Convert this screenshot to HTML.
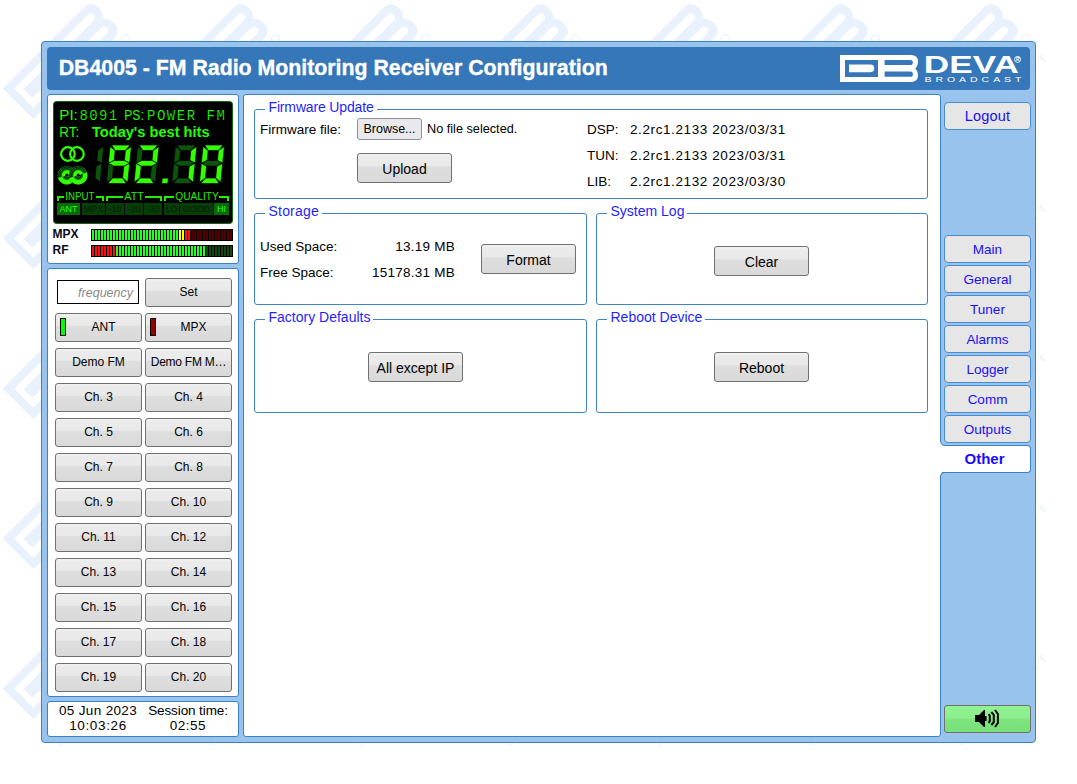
<!DOCTYPE html>
<html><head><meta charset="utf-8">
<style>
html,body{margin:0;padding:0;background:#fff;}
body{width:1077px;height:784px;position:relative;overflow:hidden;font-family:"Liberation Sans",sans-serif;color:#000;}
.a{position:absolute;}
svg{position:absolute;left:0;top:0;}
#frame{left:41px;top:41px;width:993px;height:700px;background:#97c3ec;border:1px solid #3c80c6;border-radius:4px;}
#hdr{left:47px;top:47px;width:983px;height:43px;background:#3577b8;border-radius:4px;}
#title{left:58.7px;top:55px;font-weight:bold;font-size:21.3px;line-height:26px;color:#fff;white-space:nowrap;-webkit-text-stroke:0.35px #fff;}
.pnl{background:#fff;border:1px solid #3c80c6;border-radius:3px;}
.fs{box-sizing:border-box;border:1px solid #3f84c8;border-radius:3px;}
.lg{background:#fff;color:#1f1fff;font-size:14px;line-height:15px;padding:0 3px 0 3.5px;white-space:nowrap;}
.t13{font-size:13.5px;line-height:15px;white-space:nowrap;}
.btn{box-sizing:border-box;border:1px solid #707070;border-radius:3px;background:linear-gradient(#f2f2f2 0,#ebebeb 10%,#e9e9e9 42%,#dedede 46%,#d9d9d9 100%);text-align:center;white-space:nowrap;color:#000;}
.lb{width:87px;height:29px;font-size:12px;line-height:27px;}
.mb{width:95px;height:30px;font-size:14px;line-height:31px;}
.nav{box-sizing:border-box;left:944px;width:87px;height:28px;border:1px solid #4a8ad0;border-radius:4px;background:#e6e6e6;color:#1a0dff;font-size:13.5px;line-height:27px;text-align:center;}
</style></head><body>
<svg width="1050" height="746" style="left:0;top:0"><defs><g id="mk" fill="#e9f1fc"><path fill-rule="evenodd" d="M0,0 H71 Q78,0 78,6.5 Q78,11 75.2,13.5 Q78,16 78,20.5 Q78,27 71,27 H0 Z M5,5 V22 H38 V5 Z M44.6,5 V10.1 H70.3 A2.55,2.55 0 0 0 70.3,5 Z M44.6,16.6 V21.8 H70.3 A2.6,2.6 0 0 0 70.3,16.6 Z"/><path d="M9,9.5 H30.4 A3.85,3.85 0 0 1 30.4,17.2 H9 Z"/><text x="0" y="44.5" font-family="Liberation Sans" font-weight="bold" font-size="17.8" transform="scale(1.47 1)">DEVA</text><text x="0" y="50.8" font-family="Liberation Sans" font-size="6.2" letter-spacing="2.6" transform="scale(1.3 1)">BROADCAST</text><circle cx="76" cy="32.3" r="2.6" fill="none" stroke="#e9f1fc" stroke-width="0.7"/></g></defs><use href="#mk" transform="translate(-147.2 -61.5) rotate(-45) scale(1.6)"/><use href="#mk" transform="translate(-147.2 88.5) rotate(-45) scale(1.6)"/><use href="#mk" transform="translate(-147.2 238.5) rotate(-45) scale(1.6)"/><use href="#mk" transform="translate(-147.2 388.5) rotate(-45) scale(1.6)"/><use href="#mk" transform="translate(-147.2 538.5) rotate(-45) scale(1.6)"/><use href="#mk" transform="translate(-147.2 688.5) rotate(-45) scale(1.6)"/><use href="#mk" transform="translate(-147.2 838.5) rotate(-45) scale(1.6)"/><use href="#mk" transform="translate(2.8 -61.5) rotate(-45) scale(1.6)"/><use href="#mk" transform="translate(2.8 88.5) rotate(-45) scale(1.6)"/><use href="#mk" transform="translate(2.8 238.5) rotate(-45) scale(1.6)"/><use href="#mk" transform="translate(2.8 388.5) rotate(-45) scale(1.6)"/><use href="#mk" transform="translate(2.8 538.5) rotate(-45) scale(1.6)"/><use href="#mk" transform="translate(2.8 688.5) rotate(-45) scale(1.6)"/><use href="#mk" transform="translate(2.8 838.5) rotate(-45) scale(1.6)"/><use href="#mk" transform="translate(152.8 -61.5) rotate(-45) scale(1.6)"/><use href="#mk" transform="translate(152.8 88.5) rotate(-45) scale(1.6)"/><use href="#mk" transform="translate(152.8 238.5) rotate(-45) scale(1.6)"/><use href="#mk" transform="translate(152.8 388.5) rotate(-45) scale(1.6)"/><use href="#mk" transform="translate(152.8 538.5) rotate(-45) scale(1.6)"/><use href="#mk" transform="translate(152.8 688.5) rotate(-45) scale(1.6)"/><use href="#mk" transform="translate(152.8 838.5) rotate(-45) scale(1.6)"/><use href="#mk" transform="translate(302.8 -61.5) rotate(-45) scale(1.6)"/><use href="#mk" transform="translate(302.8 88.5) rotate(-45) scale(1.6)"/><use href="#mk" transform="translate(302.8 238.5) rotate(-45) scale(1.6)"/><use href="#mk" transform="translate(302.8 388.5) rotate(-45) scale(1.6)"/><use href="#mk" transform="translate(302.8 538.5) rotate(-45) scale(1.6)"/><use href="#mk" transform="translate(302.8 688.5) rotate(-45) scale(1.6)"/><use href="#mk" transform="translate(302.8 838.5) rotate(-45) scale(1.6)"/><use href="#mk" transform="translate(452.8 -61.5) rotate(-45) scale(1.6)"/><use href="#mk" transform="translate(452.8 88.5) rotate(-45) scale(1.6)"/><use href="#mk" transform="translate(452.8 238.5) rotate(-45) scale(1.6)"/><use href="#mk" transform="translate(452.8 388.5) rotate(-45) scale(1.6)"/><use href="#mk" transform="translate(452.8 538.5) rotate(-45) scale(1.6)"/><use href="#mk" transform="translate(452.8 688.5) rotate(-45) scale(1.6)"/><use href="#mk" transform="translate(452.8 838.5) rotate(-45) scale(1.6)"/><use href="#mk" transform="translate(602.8 -61.5) rotate(-45) scale(1.6)"/><use href="#mk" transform="translate(602.8 88.5) rotate(-45) scale(1.6)"/><use href="#mk" transform="translate(602.8 238.5) rotate(-45) scale(1.6)"/><use href="#mk" transform="translate(602.8 388.5) rotate(-45) scale(1.6)"/><use href="#mk" transform="translate(602.8 538.5) rotate(-45) scale(1.6)"/><use href="#mk" transform="translate(602.8 688.5) rotate(-45) scale(1.6)"/><use href="#mk" transform="translate(602.8 838.5) rotate(-45) scale(1.6)"/><use href="#mk" transform="translate(752.8 -61.5) rotate(-45) scale(1.6)"/><use href="#mk" transform="translate(752.8 88.5) rotate(-45) scale(1.6)"/><use href="#mk" transform="translate(752.8 238.5) rotate(-45) scale(1.6)"/><use href="#mk" transform="translate(752.8 388.5) rotate(-45) scale(1.6)"/><use href="#mk" transform="translate(752.8 538.5) rotate(-45) scale(1.6)"/><use href="#mk" transform="translate(752.8 688.5) rotate(-45) scale(1.6)"/><use href="#mk" transform="translate(752.8 838.5) rotate(-45) scale(1.6)"/><use href="#mk" transform="translate(902.8 -61.5) rotate(-45) scale(1.6)"/><use href="#mk" transform="translate(902.8 88.5) rotate(-45) scale(1.6)"/><use href="#mk" transform="translate(902.8 238.5) rotate(-45) scale(1.6)"/><use href="#mk" transform="translate(902.8 388.5) rotate(-45) scale(1.6)"/><use href="#mk" transform="translate(902.8 538.5) rotate(-45) scale(1.6)"/><use href="#mk" transform="translate(902.8 688.5) rotate(-45) scale(1.6)"/><use href="#mk" transform="translate(902.8 838.5) rotate(-45) scale(1.6)"/><use href="#mk" transform="translate(1052.8 -61.5) rotate(-45) scale(1.6)"/><use href="#mk" transform="translate(1052.8 88.5) rotate(-45) scale(1.6)"/><use href="#mk" transform="translate(1052.8 238.5) rotate(-45) scale(1.6)"/><use href="#mk" transform="translate(1052.8 388.5) rotate(-45) scale(1.6)"/><use href="#mk" transform="translate(1052.8 538.5) rotate(-45) scale(1.6)"/><use href="#mk" transform="translate(1052.8 688.5) rotate(-45) scale(1.6)"/><use href="#mk" transform="translate(1052.8 838.5) rotate(-45) scale(1.6)"/></svg>
<div id="frame" class="a"></div>
<div id="hdr" class="a"></div>
<div id="title" class="a">DB4005 - FM Radio Monitoring Receiver Configuration</div>

<!-- left panels -->
<div class="a pnl" style="left:47px;top:94px;width:190px;height:168px;"></div>
<div class="a pnl" style="left:47px;top:268px;width:190px;height:427px;"></div>
<div class="a pnl" style="left:47px;top:701px;width:190px;height:34px;"></div>
<!-- main panel -->
<div class="a pnl" style="left:243px;top:94px;width:696px;height:641px;"></div>


<!-- left panel 2 content -->
<div class="a" style="left:57px;top:280px;width:80px;height:22px;border:1px solid #000;background:#fff;"></div>
<div class="a" style="left:57px;top:284.5px;width:76px;text-align:right;font-style:italic;font-size:12.5px;line-height:16px;color:#8a8a8a;">frequency</div>
<div class="a btn lb" style="left:145px;top:278px">Set</div>
<div class="a btn lb" style="left:55px;top:313px;padding-left:10px">ANT</div>
<div class="a btn lb" style="left:145px;top:313px;padding-left:10px">MPX</div>
<div class="a" style="left:60px;top:318px;width:4px;height:16px;border:1px solid #000;background:#00ff00;"></div>
<div class="a" style="left:150px;top:318px;width:4px;height:16px;border:1px solid #000;background:#990000;"></div>
<div class="a btn lb" style="left:55px;top:348px">Demo FM</div><div class="a btn lb" style="left:145px;top:348px;letter-spacing:-0.25px">Demo FM M…</div>
<div class="a btn lb" style="left:55px;top:383px">Ch. 3</div><div class="a btn lb" style="left:145px;top:383px">Ch. 4</div>
<div class="a btn lb" style="left:55px;top:418px">Ch. 5</div><div class="a btn lb" style="left:145px;top:418px">Ch. 6</div>
<div class="a btn lb" style="left:55px;top:453px">Ch. 7</div><div class="a btn lb" style="left:145px;top:453px">Ch. 8</div>
<div class="a btn lb" style="left:55px;top:488px">Ch. 9</div><div class="a btn lb" style="left:145px;top:488px">Ch. 10</div>
<div class="a btn lb" style="left:55px;top:523px">Ch. 11</div><div class="a btn lb" style="left:145px;top:523px">Ch. 12</div>
<div class="a btn lb" style="left:55px;top:558px">Ch. 13</div><div class="a btn lb" style="left:145px;top:558px">Ch. 14</div>
<div class="a btn lb" style="left:55px;top:593px">Ch. 15</div><div class="a btn lb" style="left:145px;top:593px">Ch. 16</div>
<div class="a btn lb" style="left:55px;top:628px">Ch. 17</div><div class="a btn lb" style="left:145px;top:628px">Ch. 18</div>
<div class="a btn lb" style="left:55px;top:663px">Ch. 19</div><div class="a btn lb" style="left:145px;top:663px">Ch. 20</div>
<!-- date panel -->
<div class="a" style="left:48px;top:703px;width:100px;text-align:center;font-size:13.5px;line-height:15px;white-space:nowrap"><span style="letter-spacing:0.35px">05 Jun 2023</span><br><span style="letter-spacing:0.65px">10:03:26</span></div>
<div class="a" style="left:138px;top:703px;width:100px;text-align:center;font-size:13.5px;line-height:15px;white-space:nowrap"><span style="letter-spacing:-0.1px">Session time:</span><br><span style="letter-spacing:0.5px">02:55</span></div>

<!-- main content -->
<div class="a fs" style="left:254px;top:109px;width:674px;height:90px;"></div>
<div class="a lg" style="left:265px;top:100px;letter-spacing:-0.15px">Firmware Update</div>
<div class="a t13" style="left:260px;top:122px;">Firmware file:</div>
<div class="a" style="box-sizing:border-box;left:357px;top:118px;width:65px;height:22px;border:1px solid #8f8f9d;border-radius:3px;background:#e9e9ed;font-size:12.5px;line-height:21px;text-align:center;">Browse...</div>
<div class="a" style="left:427px;top:122px;font-size:12.7px;line-height:15px;white-space:nowrap;">No file selected.</div>
<div class="a btn mb" style="left:357px;top:153px">Upload</div>
<div class="a t13" style="left:587px;line-height:26px;top:117px">DSP:<br>TUN:<br>LIB:</div>
<div class="a t13" style="left:630px;top:117px;line-height:26px;letter-spacing:0.6px">2.2rc1.2133 2023/03/31<br>2.2rc1.2133 2023/03/31<br>2.2rc1.2132 2023/03/30</div>

<div class="a fs" style="left:254px;top:213px;width:333px;height:92px;"></div>
<div class="a lg" style="left:265px;top:204px;letter-spacing:0.2px">Storage</div>
<div class="a t13" style="left:260px;top:234px;line-height:26px;">Used Space:<br>Free Space:</div>
<div class="a t13" style="left:340px;top:234px;width:115px;text-align:right;line-height:26px;letter-spacing:0.25px">13.19 MB<br>15178.31 MB</div>
<div class="a btn mb" style="left:481px;top:244px">Format</div>

<div class="a fs" style="left:596px;top:213px;width:332px;height:92px;"></div>
<div class="a lg" style="left:607px;top:204px;">System Log</div>
<div class="a btn mb" style="left:714px;top:246px">Clear</div>

<div class="a fs" style="left:254px;top:319px;width:333px;height:94px;"></div>
<div class="a lg" style="left:265px;top:310px;">Factory Defaults</div>
<div class="a btn mb" style="left:368px;top:352px">All except IP</div>

<div class="a fs" style="left:596px;top:319px;width:332px;height:94px;"></div>
<div class="a lg" style="left:607px;top:310px;">Reboot Device</div>
<div class="a btn mb" style="left:714px;top:352px">Reboot</div>

<!-- nav -->
<div class="a nav" style="top:102px;font-size:14.5px;letter-spacing:0.2px">Logout</div>
<div class="a nav" style="top:235px">Main</div>
<div class="a nav" style="top:265px">General</div>
<div class="a nav" style="top:295px">Tuner</div>
<div class="a nav" style="top:325px">Alarms</div>
<div class="a nav" style="top:355px">Logger</div>
<div class="a nav" style="top:385px">Comm</div>
<div class="a nav" style="top:415px">Outputs</div>
<div class="a" style="box-sizing:border-box;left:940px;top:445px;width:91px;height:28px;background:#fff;border:1px solid #3c80c6;border-left:none;border-radius:0 4px 4px 0;color:#1a0dff;font-weight:bold;font-size:15px;line-height:26px;text-align:center;padding-right:1px">Other</div>
<div class="a" style="box-sizing:border-box;left:944px;top:705px;width:87px;height:28px;border:1px solid #6f6f6f;border-radius:3px;background:linear-gradient(#92f292 0,#8cee8c 45%,#7ee47e 55%,#78e078 100%);"></div>

<!-- graphics overlay -->
<svg width="1077" height="784" style="pointer-events:none">
 <!-- header logo -->
 <g fill="#fff">
  <path fill-rule="evenodd" d="M840,55 H911 Q918,55 918,61.5 Q918,66 915.2,68.5 Q918,71 918,75.5 Q918,82 911,82 H840 Z
   M845,60 V77 H878 V60 Z
   M884.6,60 V65.1 H910.3 A2.55,2.55 0 0 0 910.3,60 Z
   M884.6,71.6 V76.8 H910.3 A2.6,2.6 0 0 0 910.3,71.6 Z"/>
  <path d="M849,64.5 H870.4 A3.85,3.85 0 0 1 870.4,72.2 H849 Z"/>
 </g>
 <text x="923.8" y="73" font-family="Liberation Sans" font-weight="bold" font-size="23.3" fill="#fff" transform="translate(923.8 0) scale(1.51 1) translate(-923.8 0)">DEVA</text>
 <text x="924.5" y="81.8" font-family="Liberation Sans" font-size="6.6" fill="#fff" letter-spacing="2.45" transform="translate(924.5 0) scale(1.6 1) translate(-924.5 0)">BROADCAST</text>
 <circle cx="1017.6" cy="59.4" r="3" fill="none" stroke="#fff" stroke-width="0.9"/>
 <text x="1015.9" y="61.3" font-family="Liberation Sans" font-weight="bold" font-size="5" fill="#fff">R</text>

 <!-- LCD -->
 <rect x="53.5" y="101.5" width="179" height="122" rx="3" fill="#000" stroke="#0b6b0b" stroke-width="1"/>
 <g fill="#22ff00" font-family="Liberation Sans">
  <text x="59.3" y="120" font-size="15" textLength="18.5" lengthAdjust="spacingAndGlyphs">PI:</text>
  <text x="124.3" y="120" font-size="15" textLength="19.5" lengthAdjust="spacingAndGlyphs">PS:</text>
  <text x="59.3" y="136.5" font-size="14" textLength="20" lengthAdjust="spacingAndGlyphs">RT:</text>
  <text x="92" y="136.5" font-size="14.5" font-weight="bold" textLength="117.5" lengthAdjust="spacingAndGlyphs">Today's best hits</text>
 </g>
 <g fill="#22ff00" font-family="Liberation Mono" font-size="14" stroke="#000" stroke-width="0.2">
  <text x="79.6" y="120" textLength="37.6" lengthAdjust="spacing">8091</text>
  <text x="147" y="120" textLength="77.8" lengthAdjust="spacing">POWER FM</text>
 </g>
 <!-- stereo rings -->
 <g fill="none" stroke="#33ff00" stroke-width="2.2">
  <circle cx="67.9" cy="154" r="6.8"/>
  <circle cx="76.9" cy="154" r="6.8"/>
 </g>
 <!-- RDS icon -->
 <g><circle cx="66.9" cy="175.2" r="9.3" fill="#128012"/><circle cx="66.9" cy="175.2" r="6.5" fill="none" stroke="#000" stroke-width="0.9"/><circle cx="66.9" cy="175.2" r="8.2" fill="none" stroke="#000" stroke-width="0.8"/><circle cx="66.9" cy="175.2" r="3.1" fill="none" stroke="#000" stroke-width="0.9"/><g transform="rotate(-18 66.9 175.2)"><path d="M62.00000000000001,175.2 A4.9,4.9 0 0 1 71.80000000000001,175.2 L68.30000000000001,175.2 A1.4,1.4 0 0 0 65.5,175.2 Z" fill="#33ff00"/><path d="M57.60000000000001,175.2 A9.3,9.3 0 0 0 76.2,175.2 L71.80000000000001,175.2 A4.9,4.9 0 0 1 62.00000000000001,175.2 Z" fill="#33ff00"/></g><circle cx="66.9" cy="175.2" r="1.4" fill="#000"/><circle cx="78.2" cy="175.2" r="9.3" fill="#128012"/><circle cx="78.2" cy="175.2" r="6.5" fill="none" stroke="#000" stroke-width="0.9"/><circle cx="78.2" cy="175.2" r="8.2" fill="none" stroke="#000" stroke-width="0.8"/><circle cx="78.2" cy="175.2" r="3.1" fill="none" stroke="#000" stroke-width="0.9"/><g transform="rotate(-18 78.2 175.2)"><path d="M73.3,175.2 A4.9,4.9 0 0 1 83.10000000000001,175.2 L79.60000000000001,175.2 A1.4,1.4 0 0 0 76.8,175.2 Z" fill="#33ff00"/><path d="M68.9,175.2 A9.3,9.3 0 0 0 87.5,175.2 L83.10000000000001,175.2 A4.9,4.9 0 0 1 73.3,175.2 Z" fill="#33ff00"/></g><circle cx="78.2" cy="175.2" r="1.4" fill="#000"/></g>
 <g stroke="#000" stroke-width="0.7">
 <polygon points="103.72,146.40 102.03,163.30 96.71,160.50 97.70,150.60" fill="#0c530c"/>
<polygon points="102.03,163.30 100.14,182.20 94.96,178.00 96.15,166.10" fill="#0c530c"/>
<polygon points="111.56,145.00 130.16,145.00 125.40,150.60 115.20,150.60" fill="#33ff00"/>
<polygon points="131.42,146.40 129.73,163.30 124.41,160.50 125.40,150.60" fill="#33ff00"/>
<polygon points="129.73,163.30 127.84,182.20 122.66,178.00 123.85,166.10" fill="#33ff00"/>
<polygon points="107.70,183.60 112.46,178.00 122.66,178.00 126.30,183.60" fill="#33ff00"/>
<polygon points="108.33,163.30 113.65,166.10 112.46,178.00 106.44,182.20" fill="#0c530c"/>
<polygon points="110.02,146.40 115.20,150.60 114.21,160.50 108.33,163.30" fill="#33ff00"/>
<polygon points="108.33,163.30 114.21,160.50 124.41,160.50 129.73,163.30 123.85,166.10 113.65,166.10" fill="#33ff00"/>
<polygon points="139.16,145.00 157.76,145.00 153.00,150.60 142.80,150.60" fill="#33ff00"/>
<polygon points="159.02,146.40 157.33,163.30 152.01,160.50 153.00,150.60" fill="#33ff00"/>
<polygon points="157.33,163.30 155.44,182.20 150.26,178.00 151.45,166.10" fill="#0c530c"/>
<polygon points="135.30,183.60 140.06,178.00 150.26,178.00 153.90,183.60" fill="#33ff00"/>
<polygon points="135.93,163.30 141.25,166.10 140.06,178.00 134.04,182.20" fill="#33ff00"/>
<polygon points="137.62,146.40 142.80,150.60 141.81,160.50 135.93,163.30" fill="#0c530c"/>
<polygon points="135.93,163.30 141.81,160.50 152.01,160.50 157.33,163.30 151.45,166.10 141.25,166.10" fill="#33ff00"/>
<polygon points="176.96,145.00 195.56,145.00 190.80,150.60 180.60,150.60" fill="#0c530c"/>
<polygon points="196.82,146.40 195.13,163.30 189.81,160.50 190.80,150.60" fill="#33ff00"/>
<polygon points="195.13,163.30 193.24,182.20 188.06,178.00 189.25,166.10" fill="#33ff00"/>
<polygon points="173.10,183.60 177.86,178.00 188.06,178.00 191.70,183.60" fill="#0c530c"/>
<polygon points="173.73,163.30 179.05,166.10 177.86,178.00 171.84,182.20" fill="#0c530c"/>
<polygon points="175.42,146.40 180.60,150.60 179.61,160.50 173.73,163.30" fill="#0c530c"/>
<polygon points="173.73,163.30 179.61,160.50 189.81,160.50 195.13,163.30 189.25,166.10 179.05,166.10" fill="#0c530c"/>
<polygon points="204.56,145.00 223.16,145.00 218.40,150.60 208.20,150.60" fill="#33ff00"/>
<polygon points="224.42,146.40 222.73,163.30 217.41,160.50 218.40,150.60" fill="#33ff00"/>
<polygon points="222.73,163.30 220.84,182.20 215.66,178.00 216.85,166.10" fill="#33ff00"/>
<polygon points="200.70,183.60 205.46,178.00 215.66,178.00 219.30,183.60" fill="#33ff00"/>
<polygon points="201.33,163.30 206.65,166.10 205.46,178.00 199.44,182.20" fill="#33ff00"/>
<polygon points="203.02,146.40 208.20,150.60 207.21,160.50 201.33,163.30" fill="#33ff00"/>
<polygon points="201.33,163.30 207.21,160.50 217.41,160.50 222.73,163.30 216.85,166.10 206.65,166.10" fill="#0c530c"/>
 </g>
 <polygon points="162.6,178.4 168,178.4 167.5,183.2 162.1,183.2" fill="#33ff00"/>
 <!-- brackets -->
 <g fill="#22ee00">
  <rect x="57" y="196" width="7" height="2"/><rect x="57" y="196" width="2" height="5"/>
  <rect x="96" y="196" width="8" height="2"/><rect x="102" y="196" width="2" height="5"/>
  <rect x="106" y="196" width="17" height="2"/><rect x="106" y="196" width="2" height="5"/>
  <rect x="145" y="196" width="17" height="2"/><rect x="160" y="196" width="2" height="5"/>
  <rect x="164" y="196" width="10" height="2"/><rect x="164" y="196" width="2" height="5"/>
  <rect x="219" y="196" width="10" height="2"/><rect x="227" y="196" width="2" height="5"/>
 </g>
 <g font-family="Liberation Sans" font-size="10.5" fill="#22ee00">
  <text x="65.3" y="200" textLength="29" lengthAdjust="spacingAndGlyphs">INPUT</text>
  <text x="124.3" y="200" textLength="19.5" lengthAdjust="spacingAndGlyphs">ATT</text>
  <text x="175.3" y="200" textLength="43.5" lengthAdjust="spacingAndGlyphs">QUALITY</text>
 </g>
 <g>
  <rect x="57" y="203" width="23" height="12" fill="#0a6a0a"/>
  <rect x="82" y="203" width="23" height="12" fill="#073d07"/>
  <rect x="106" y="203" width="18" height="12" fill="#073d07"/>
  <rect x="125" y="203" width="18" height="12" fill="#073d07"/>
  <rect x="144" y="203" width="18" height="12" fill="#073d07"/>
  <rect x="164" y="203" width="15" height="12" fill="#073d07"/>
  <rect x="180" y="203" width="33" height="12" fill="#073d07"/>
  <rect x="214" y="203" width="15" height="12" fill="#0a6a0a"/>
 </g>
 <g font-family="Liberation Sans" font-size="9" text-anchor="middle">
  <text x="68.5" y="212" fill="#33ff00">ANT</text>
  <text x="93.5" y="212" fill="#021f02">MPX</text>
  <text x="115" y="212" fill="#021f02">-10</text>
  <text x="134" y="212" fill="#021f02">-20</text>
  <text x="153" y="212" fill="#021f02">-30</text>
  <text x="171.5" y="212" fill="#021f02">LO</text>
  <text x="196.5" y="212" fill="#021f02">GOOD</text>
  <text x="221.5" y="212" fill="#33ff00">HI</text>
 </g>
 <!-- bars -->
 <g font-family="Liberation Sans" font-weight="bold" font-size="12" fill="#0a0a1a">
  <text x="52.5" y="238">MPX</text>
  <text x="52.5" y="254">RF</text>
 </g>
 <rect x="91" y="229" width="142" height="12" fill="#000"/>
<rect x="92" y="230" width="2" height="10" fill="#22ff22"/>
<rect x="95" y="230" width="2" height="10" fill="#22ff22"/>
<rect x="98" y="230" width="2" height="10" fill="#22ff22"/>
<rect x="101" y="230" width="2" height="10" fill="#22ff22"/>
<rect x="104" y="230" width="2" height="10" fill="#22ff22"/>
<rect x="107" y="230" width="2" height="10" fill="#22ff22"/>
<rect x="110" y="230" width="2" height="10" fill="#22ff22"/>
<rect x="113" y="230" width="2" height="10" fill="#22ff22"/>
<rect x="116" y="230" width="2" height="10" fill="#22ff22"/>
<rect x="119" y="230" width="2" height="10" fill="#22ff22"/>
<rect x="122" y="230" width="2" height="10" fill="#22ff22"/>
<rect x="125" y="230" width="2" height="10" fill="#22ff22"/>
<rect x="128" y="230" width="2" height="10" fill="#22ff22"/>
<rect x="131" y="230" width="2" height="10" fill="#22ff22"/>
<rect x="134" y="230" width="2" height="10" fill="#22ff22"/>
<rect x="137" y="230" width="2" height="10" fill="#22ff22"/>
<rect x="140" y="230" width="2" height="10" fill="#22ff22"/>
<rect x="143" y="230" width="2" height="10" fill="#22ff22"/>
<rect x="146" y="230" width="2" height="10" fill="#22ff22"/>
<rect x="149" y="230" width="2" height="10" fill="#22ff22"/>
<rect x="152" y="230" width="2" height="10" fill="#22ff22"/>
<rect x="155" y="230" width="2" height="10" fill="#22ff22"/>
<rect x="158" y="230" width="2" height="10" fill="#22ff22"/>
<rect x="161" y="230" width="2" height="10" fill="#22ff22"/>
<rect x="164" y="230" width="2" height="10" fill="#22ff22"/>
<rect x="167" y="230" width="2" height="10" fill="#22ff22"/>
<rect x="170" y="230" width="2" height="10" fill="#22ff22"/>
<rect x="173" y="230" width="2" height="10" fill="#22ff22"/>
<rect x="176" y="230" width="2" height="10" fill="#22ff22"/>
<rect x="179" y="230" width="2" height="10" fill="#ffff00"/>
<rect x="182" y="230" width="2" height="10" fill="#ffff00"/>
<rect x="185" y="230" width="2" height="10" fill="#ff1010"/>
<rect x="188" y="230" width="2" height="10" fill="#ff1010"/>
<rect x="191" y="230" width="2" height="10" fill="#550000"/>
<rect x="194" y="230" width="2" height="10" fill="#550000"/>
<rect x="197" y="230" width="2" height="10" fill="#550000"/>
<rect x="200" y="230" width="2" height="10" fill="#550000"/>
<rect x="203" y="230" width="2" height="10" fill="#550000"/>
<rect x="206" y="230" width="2" height="10" fill="#550000"/>
<rect x="209" y="230" width="2" height="10" fill="#550000"/>
<rect x="212" y="230" width="2" height="10" fill="#550000"/>
<rect x="215" y="230" width="2" height="10" fill="#550000"/>
<rect x="218" y="230" width="2" height="10" fill="#550000"/>
<rect x="221" y="230" width="2" height="10" fill="#550000"/>
<rect x="224" y="230" width="2" height="10" fill="#550000"/>
<rect x="227" y="230" width="2" height="10" fill="#550000"/>
<rect x="230" y="230" width="2" height="10" fill="#550000"/>
<rect x="91" y="245" width="142" height="12" fill="#000"/>
<rect x="92" y="246" width="2" height="10" fill="#ff1010"/>
<rect x="95" y="246" width="2" height="10" fill="#ff1010"/>
<rect x="98" y="246" width="2" height="10" fill="#ff1010"/>
<rect x="101" y="246" width="2" height="10" fill="#ff1010"/>
<rect x="104" y="246" width="2" height="10" fill="#ff1010"/>
<rect x="107" y="246" width="2" height="10" fill="#ff1010"/>
<rect x="110" y="246" width="2" height="10" fill="#ff1010"/>
<rect x="113" y="246" width="2" height="10" fill="#ff1010"/>
<rect x="116" y="246" width="2" height="10" fill="#22ff22"/>
<rect x="119" y="246" width="2" height="10" fill="#22ff22"/>
<rect x="122" y="246" width="2" height="10" fill="#22ff22"/>
<rect x="125" y="246" width="2" height="10" fill="#22ff22"/>
<rect x="128" y="246" width="2" height="10" fill="#22ff22"/>
<rect x="131" y="246" width="2" height="10" fill="#22ff22"/>
<rect x="134" y="246" width="2" height="10" fill="#22ff22"/>
<rect x="137" y="246" width="2" height="10" fill="#22ff22"/>
<rect x="140" y="246" width="2" height="10" fill="#22ff22"/>
<rect x="143" y="246" width="2" height="10" fill="#22ff22"/>
<rect x="146" y="246" width="2" height="10" fill="#22ff22"/>
<rect x="149" y="246" width="2" height="10" fill="#22ff22"/>
<rect x="152" y="246" width="2" height="10" fill="#22ff22"/>
<rect x="155" y="246" width="2" height="10" fill="#22ff22"/>
<rect x="158" y="246" width="2" height="10" fill="#22ff22"/>
<rect x="161" y="246" width="2" height="10" fill="#22ff22"/>
<rect x="164" y="246" width="2" height="10" fill="#22ff22"/>
<rect x="167" y="246" width="2" height="10" fill="#22ff22"/>
<rect x="170" y="246" width="2" height="10" fill="#22ff22"/>
<rect x="173" y="246" width="2" height="10" fill="#22ff22"/>
<rect x="176" y="246" width="2" height="10" fill="#22ff22"/>
<rect x="179" y="246" width="2" height="10" fill="#22ff22"/>
<rect x="182" y="246" width="2" height="10" fill="#22ff22"/>
<rect x="185" y="246" width="2" height="10" fill="#22ff22"/>
<rect x="188" y="246" width="2" height="10" fill="#22ff22"/>
<rect x="191" y="246" width="2" height="10" fill="#22ff22"/>
<rect x="194" y="246" width="2" height="10" fill="#22ff22"/>
<rect x="197" y="246" width="2" height="10" fill="#22ff22"/>
<rect x="200" y="246" width="2" height="10" fill="#22ff22"/>
<rect x="203" y="246" width="2" height="10" fill="#22ff22"/>
<rect x="206" y="246" width="2" height="10" fill="#104a10"/>
<rect x="209" y="246" width="2" height="10" fill="#104a10"/>
<rect x="212" y="246" width="2" height="10" fill="#104a10"/>
<rect x="215" y="246" width="2" height="10" fill="#104a10"/>
<rect x="218" y="246" width="2" height="10" fill="#104a10"/>
<rect x="221" y="246" width="2" height="10" fill="#104a10"/>
<rect x="224" y="246" width="2" height="10" fill="#104a10"/>
<rect x="227" y="246" width="2" height="10" fill="#104a10"/>
<rect x="230" y="246" width="2" height="10" fill="#104a10"/>
 <!-- tab corners -->
 <path d="M939,440 V446 H945 Q940.5,445.5 940.5,440 Z" fill="#fff"/>
 <path d="M940.5,440 Q940.5,445.5 945,445.5" fill="none" stroke="#3c80c6" stroke-width="1"/>
 <path d="M939,477 V471 H945 Q940.5,471.5 940.5,477 Z" fill="#fff"/>
 <path d="M940.5,477 Q940.5,472.5 945,472.5" fill="none" stroke="#3c80c6" stroke-width="1"/>
 <!-- speaker -->
 <g fill="#000">
  <rect x="975" y="715" width="4" height="7"/>
  <polygon points="979,715 984,710 985,710 985,727 984,727 979,722"/>
  <rect x="985" y="716" width="1.6" height="5"/>
 </g>
 <g fill="none" stroke="#000" stroke-width="2" stroke-linejoin="miter">
  <path d="M988.8,714 L989.8,716 V721 L988.8,723"/>
  <path d="M991.3,712 L993.8,714.8 V722.2 L991.3,725"/>
  <path d="M995,710 L997.9,714 V723 L995,727"/>
 </g>
</svg>

</body></html>
